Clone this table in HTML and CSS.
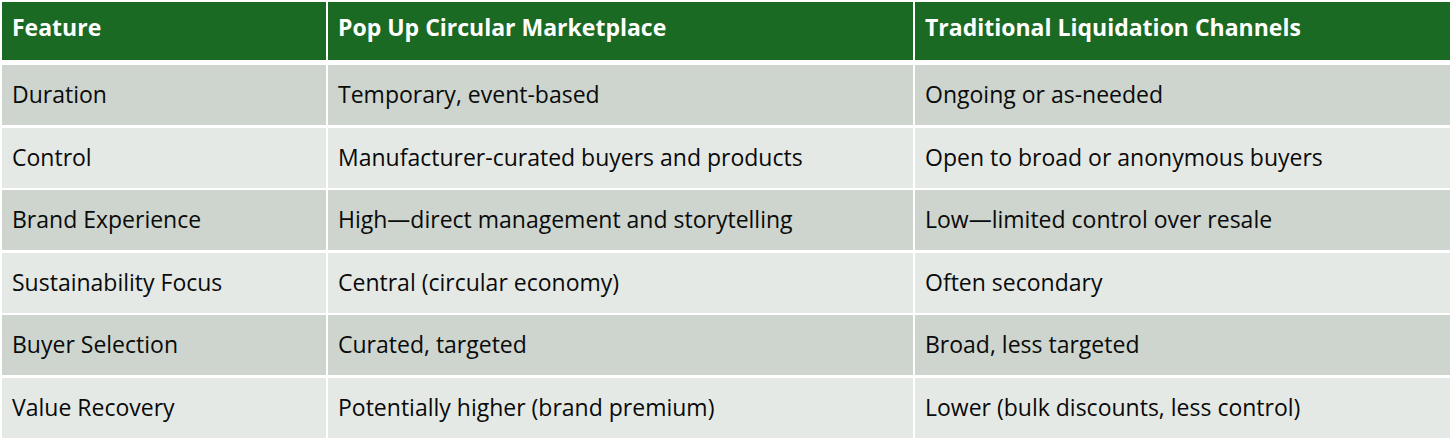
FILE: index.html
```html
<!DOCTYPE html>
<html lang="en">
<head>
<meta charset="utf-8">
<title>Comparison</title>
<link rel="stylesheet" href="styles.css">
</head>
<body>
<div class="table">
  <div class="row head">
    <div class="cell">Feature</div>
    <div class="cell">Pop Up Circular Marketplace</div>
    <div class="cell">Traditional Liquidation Channels</div>
  </div>
  <div class="body">
    <div class="row dark">
      <div class="cell">Duration</div>
      <div class="cell">Temporary, event-based</div>
      <div class="cell">Ongoing or as-needed</div>
    </div>
    <div class="row light">
      <div class="cell">Control</div>
      <div class="cell">Manufacturer-curated buyers and products</div>
      <div class="cell">Open to broad or anonymous buyers</div>
    </div>
    <div class="row dark">
      <div class="cell">Brand Experience</div>
      <div class="cell">High—direct management and storytelling</div>
      <div class="cell">Low—limited control over resale</div>
    </div>
    <div class="row light">
      <div class="cell">Sustainability Focus</div>
      <div class="cell">Central (circular economy)</div>
      <div class="cell">Often secondary</div>
    </div>
    <div class="row dark">
      <div class="cell">Buyer Selection</div>
      <div class="cell">Curated, targeted</div>
      <div class="cell">Broad, less targeted</div>
    </div>
    <div class="row light">
      <div class="cell">Value Recovery</div>
      <div class="cell">Potentially higher (brand premium)</div>
      <div class="cell">Lower (bulk discounts, less control)</div>
    </div>
  </div>
</div>
</body>
</html>
```

FILE: styles.css
```css
html, body {
  margin: 0;
  padding: 0;
  background: #ffffff;
}
body {
  padding: 2px;
  font-family: "Open Sans", "Liberation Sans", sans-serif;
  font-size: 23px;
  color: #0a0a0a;
}
.table {
  width: 1448px;
}
.row {
  display: grid;
  grid-template-columns: 324px 585px 535px;
  column-gap: 2px;
}
.cell {
  display: flex;
  align-items: center;
  padding: 0 10px;
  white-space: nowrap;
}
.head {
  height: 58px;
  margin-bottom: 5px;
}
.head .cell {
  background: #1b6a24;
  color: #ffffff;
  font-weight: 700;
  padding-bottom: 8px;
}
.body {
  display: flex;
  flex-direction: column;
  gap: 2.6px;
}
.body .row {
  height: 60px;
}
.body .cell {
  padding-bottom: 2px;
}
.dark .cell {
  background: #cdd5ce;
}
.light .cell {
  background: #e5e9e5;
}
```
